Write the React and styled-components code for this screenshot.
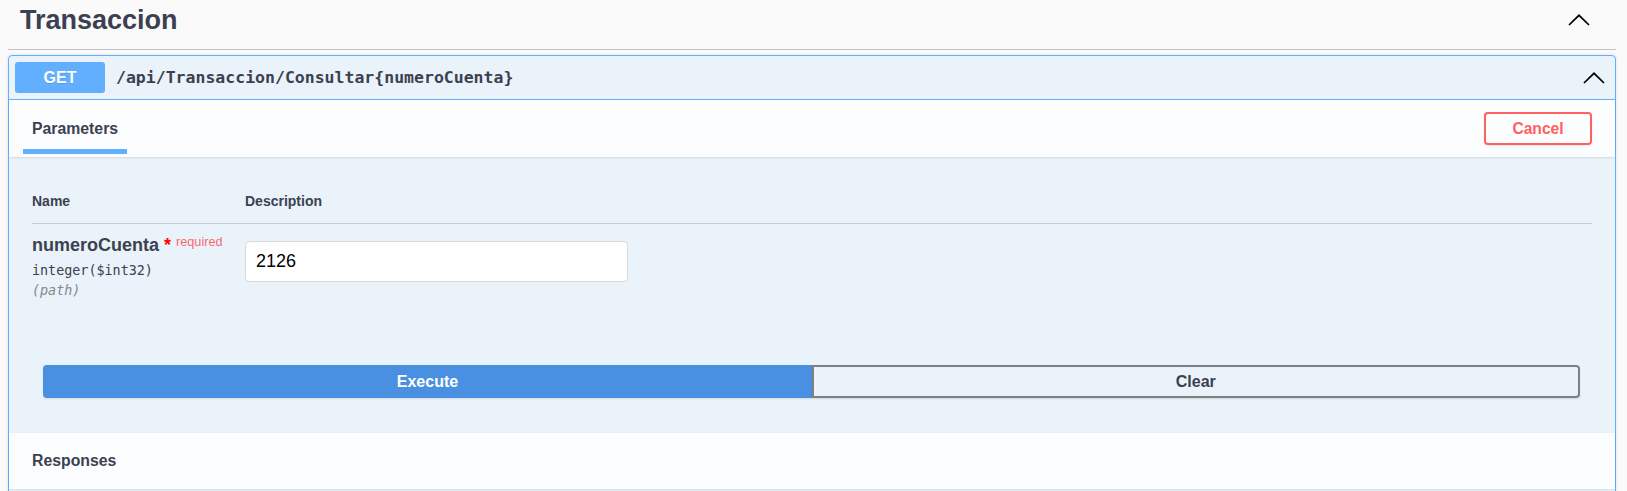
import React, { useState } from "react";
import styled, { createGlobalStyle } from "styled-components";

const GlobalStyle = createGlobalStyle`
  html, body {
    margin: 0;
    padding: 0;
    background: #fafafa;
  }
  body {
    font-family: "Liberation Sans", Arial, sans-serif;
    color: #3b4151;
  }
`;

const Page = styled.div`
  padding: 0 11.5px 0 8px;
`;

const TagHeader = styled.div`
  display: flex;
  align-items: center;
  justify-content: space-between;
  height: 40px;
  padding: 0 26px 9px 12px;
  border-bottom: 1px solid rgba(59, 65, 81, 0.3);
`;

const TagTitle = styled.h3`
  margin: 0;
  font-size: 27px;
  font-weight: 700;
  line-height: 1;
  color: #3b4151;
`;

const Opblock = styled.div`
  margin-top: 5px;
  border: 1px solid #61affe;
  border-radius: 4px;
  background: rgba(97, 175, 254, 0.1);
  box-shadow: 0 0 3px rgba(0, 0, 0, 0.12);
`;

const Summary = styled.div`
  display: flex;
  align-items: center;
  padding: 6px 10px 6px 6px;
  border-bottom: 1px solid #61affe;
`;

const Method = styled.span`
  display: flex;
  align-items: center;
  justify-content: center;
  width: 90px;
  height: 31px;
  border-radius: 3px;
  background: #61affe;
  color: #fff;
  font-size: 16px;
  font-weight: 700;
  text-shadow: 0 1px 0 rgba(0, 0, 0, 0.1);
`;

const Path = styled.span`
  flex: 1;
  padding-left: 11px;
  font-family: "DejaVu Sans Mono", "Liberation Mono", monospace;
  font-size: 16.5px;
  font-weight: 700;
  color: #3b4151;
`;

const SectionHeader = styled.div`
  display: flex;
  align-items: center;
  justify-content: space-between;
  height: ${(p) => p.$height}px;
  padding: 0 22.5px 0 14px;
  background: rgba(255, 255, 255, 0.8);
  box-shadow: 0 1px 2px rgba(0, 0, 0, 0.1);
`;

const Tab = styled.h4`
  position: relative;
  align-self: stretch;
  display: flex;
  align-items: center;
  margin: 0;
  padding: 0 9px;
  font-size: 15.8px;
  font-weight: 700;
  color: #3b4151;

  &::after {
    content: "";
    display: ${(p) => (p.$active ? "block" : "none")};
    position: absolute;
    left: 0;
    right: 0;
    bottom: 3px;
    height: 5px;
    background: #61affe;
  }
`;

const CancelButton = styled.button`
  width: 108px;
  height: 32.5px;
  border: 2px solid #ff6060;
  border-radius: 4px;
  background: transparent;
  color: #ff6060;
  font-family: inherit;
  font-size: 15.6px;
  font-weight: 700;
  box-shadow: 0 1px 2px rgba(0, 0, 0, 0.1);
  cursor: pointer;
`;

const ParamsBody = styled.div`
  padding: 0 23px;
`;

const Row = styled.div`
  display: grid;
  grid-template-columns: 213px 1fr;
`;

const HeadRow = styled(Row)`
  padding: 36px 0 14px;
  border-bottom: 1px solid rgba(59, 65, 81, 0.2);
  font-size: 14px;
  font-weight: 700;
  line-height: 16px;
`;

const DataRow = styled(Row)`
  padding: 10px 0;
`;

const ParamName = styled.div`
  font-size: 18px;
  font-weight: 700;
  line-height: 22px;
  white-space: nowrap;
`;

const Star = styled.span`
  color: red;
`;

const Required = styled.span`
  position: relative;
  top: -5.5px;
  padding-left: 5px;
  font-size: 12.7px;
  font-weight: 400;
  color: rgba(255, 0, 0, 0.6);
`;

const Mono = styled.div`
  font-family: "DejaVu Sans Mono", "Liberation Mono", monospace;
  font-size: 13.4px;
  line-height: 18px;
  padding-top: ${(p) => p.$gap}px;
  font-style: ${(p) => (p.$italic ? "italic" : "normal")};
  color: ${(p) => (p.$muted ? "#888" : "#3b4151")};
`;

const ValueInput = styled.input`
  box-sizing: border-box;
  display: block;
  width: 383px;
  height: 40.5px;
  margin-top: 7px;
  padding: 0 10px;
  border: 1px solid #d9d9d9;
  border-radius: 4px;
  background: #fff;
  font-family: "Liberation Sans", Arial, sans-serif;
  font-size: 18px;
  color: #000;
  outline: none;
`;

const ExecuteWrapper = styled.div`
  display: flex;
  padding: 55.5px 34.5px 34.4px 34.3px;
`;

const ActionButton = styled.button`
  flex: 1;
  height: 33.3px;
  border: 2px solid ${(p) => (p.$primary ? "#4990e2" : "#808080")};
  border-radius: ${(p) => (p.$primary ? "4px 0 0 4px" : "0 4px 4px 0")};
  background: ${(p) => (p.$primary ? "#4990e2" : "transparent")};
  color: ${(p) => (p.$primary ? "#fff" : "#3b4151")};
  font-family: inherit;
  font-size: 16px;
  font-weight: 700;
  box-shadow: 0 1px 2px rgba(0, 0, 0, 0.1);
  cursor: pointer;
`;

const ResponsesBody = styled.div`
  height: 120px;
`;

const Chevron = () => (
  <svg width="22" height="12" viewBox="0 0 22 12">
    <polyline
      points="1,11 11,1.3 21,11"
      fill="none"
      stroke="#000"
      strokeWidth="1.7"
    />
  </svg>
);

const App = () => {
  const [cuenta, setCuenta] = useState("2126");

  return (
    <>
      <GlobalStyle />
      <Page>
        <TagHeader>
          <TagTitle>Transaccion</TagTitle>
          <Chevron />
        </TagHeader>

        <Opblock>
          <Summary>
            <Method>GET</Method>
            <Path>/api/Transaccion/Consultar{"{numeroCuenta}"}</Path>
            <Chevron />
          </Summary>

          <SectionHeader $height={57}>
            <Tab $active>Parameters</Tab>
            <CancelButton>Cancel</CancelButton>
          </SectionHeader>

          <ParamsBody>
            <HeadRow>
              <span>Name</span>
              <span>Description</span>
            </HeadRow>
            <DataRow>
              <div>
                <ParamName>
                  numeroCuenta
                  <Star>{"\u00a0*"}</Star>
                  <Required>required</Required>
                </ParamName>
                <Mono $gap={3.5}>integer($int32)</Mono>
                <Mono $gap={2} $italic $muted>
                  (path)
                </Mono>
              </div>
              <div>
                <ValueInput
                  value={cuenta}
                  onChange={(e) => setCuenta(e.target.value)}
                />
              </div>
            </DataRow>
          </ParamsBody>

          <ExecuteWrapper>
            <ActionButton $primary>Execute</ActionButton>
            <ActionButton>Clear</ActionButton>
          </ExecuteWrapper>

          <SectionHeader $height={56}>
            <Tab>Responses</Tab>
          </SectionHeader>
          <ResponsesBody />
        </Opblock>
      </Page>
    </>
  );
};

export default App;
